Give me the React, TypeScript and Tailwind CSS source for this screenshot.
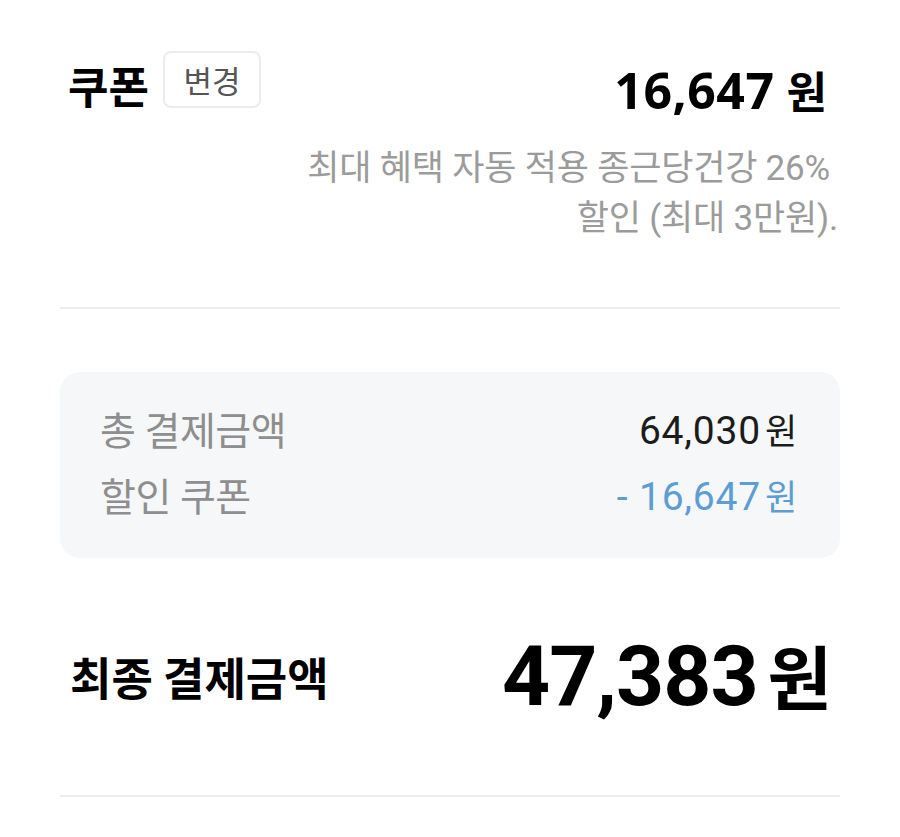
const KR = "font-['Roboto','Noto_Sans_CJK_KR',sans-serif]";

type SummaryRow = {
  label: string;
  amount: string;
  tone: "plain" | "discount";
};

const summaryRows: SummaryRow[] = [
  { label: "총 결제금액", amount: "64,030", tone: "plain" },
  { label: "할인 쿠폰", amount: "- 16,647", tone: "discount" },
];

function CouponSection() {
  return (
    <section className="h-[307px] pt-[51px]">
      <div className="flex items-start justify-between">
        <div className="flex items-start gap-[14px]">
          <h2 className="mt-[12px] pl-[8px] font-['Noto_Sans_CJK_KR',sans-serif] text-[44px] leading-[44px] font-bold text-black">
            쿠폰
          </h2>
          <button
            type="button"
            className="flex h-[57px] w-[98px] items-center justify-center rounded-[8px] border-2 border-[#ececec] font-['Noto_Sans_CJK_KR',sans-serif] text-[31px] leading-none text-[#555]"
          >
            변경
          </button>
        </div>
        <p className="mt-[14px] mr-[13px] flex items-baseline gap-[12px] leading-none font-bold text-black">
          <span className="font-['Open_Sans',sans-serif] text-[50px] tracking-[0.5px]">
            16,647
          </span>
          <span className="font-['Noto_Sans_CJK_KR',sans-serif] text-[44px]">원</span>
        </p>
      </div>
      <div className={`mt-[29px] text-right text-[35px] leading-[50px] tracking-[-0.2px] text-[#9b9b9b] ${KR}`}>
        <span className="block pr-[10px]">최대 혜택 자동 적용 종근당건강 26%</span>
        <span className="block pr-[2px]">할인 (최대 3만원).</span>
      </div>
    </section>
  );
}

function SummaryBox() {
  return (
    <div className="mt-[63px] flex h-[186px] flex-col justify-center gap-[24px] rounded-[20px] bg-[#f6f7f9] pr-[42px] pl-[40px]">
      {summaryRows.map((row) => (
        <div key={row.label} className="flex items-center justify-between">
          <span className={`text-[39px] leading-[40px] tracking-[-0.5px] text-[#8e8e8e] ${KR}`}>
            {row.label}
          </span>
          <span
            className={`flex items-baseline gap-[4px] text-[39px] leading-[40px] tracking-[0.8px] ${KR} ${
              row.tone === "discount" ? "text-[#5b9dd4]" : "text-[#1c1c1c]"
            }`}
          >
            <span>{row.amount}</span>
            <span className="text-[35px]">원</span>
          </span>
        </div>
      ))}
    </div>
  );
}

function FinalTotal() {
  return (
    <section className="flex h-[239px] items-center justify-between border-b-2 border-[#ececec]">
      <h2 className="pl-[10px] font-['Noto_Sans_CJK_KR',sans-serif] text-[45px] leading-none font-bold text-black">
        최종 결제금액
      </h2>
      <p className="mr-[8px] flex items-baseline gap-[10px] leading-none font-bold text-black">
        <span className="font-['Roboto',sans-serif] text-[84px] tracking-[-1px]">47,383</span>
        <span className="font-['Noto_Sans_CJK_KR',sans-serif] text-[70px]">원</span>
      </p>
    </section>
  );
}

export default function App() {
  return (
    <main className="min-h-screen w-[900px] bg-white px-[60px]">
      <CouponSection />
      <div className="h-[2px] bg-[#ececec]" />
      <SummaryBox />
      <FinalTotal />
    </main>
  );
}
